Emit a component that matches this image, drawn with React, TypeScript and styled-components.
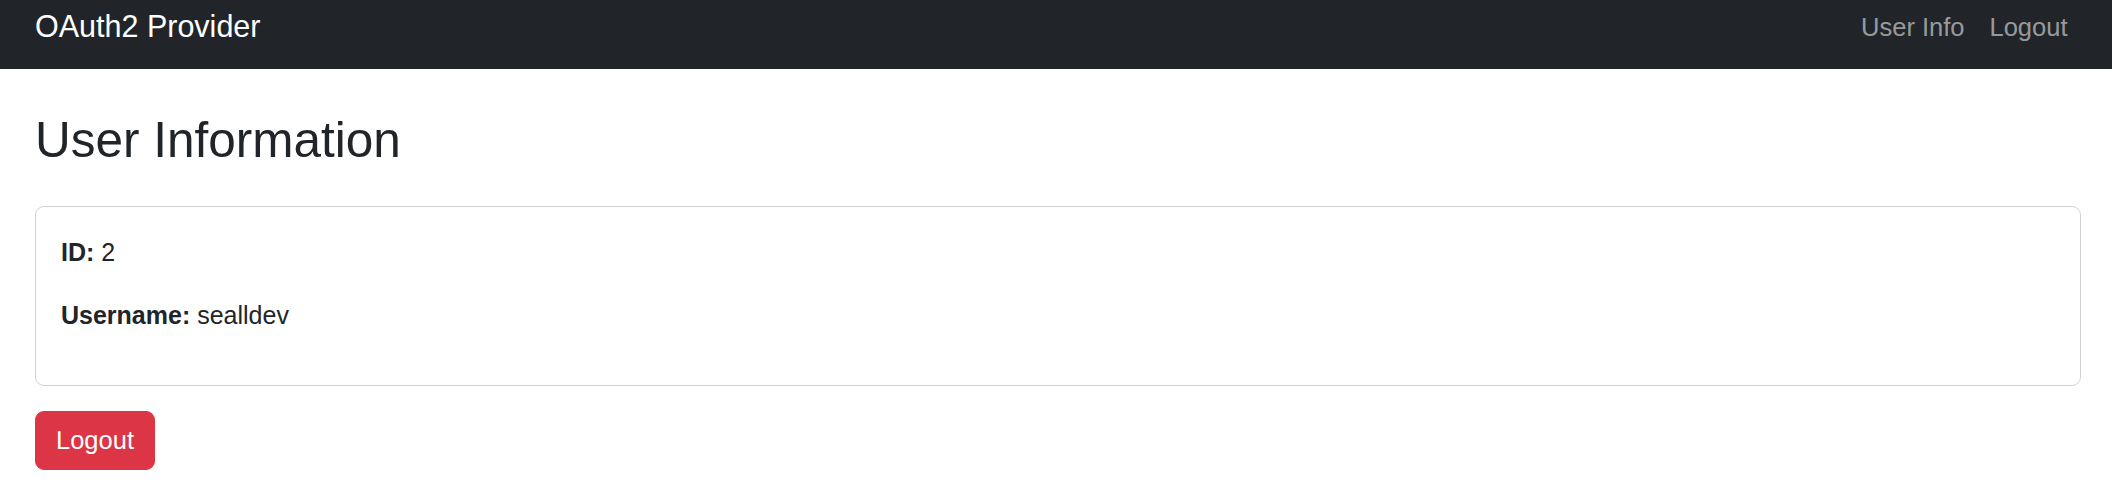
import React from 'react'
import styled, { createGlobalStyle } from 'styled-components'

const GlobalStyle = createGlobalStyle`
  * {
    box-sizing: border-box;
  }

  body {
    margin: 0;
    background: #ffffff;
    color: #212529;
    font-family: 'Liberation Sans', Arial, sans-serif;
  }
`

const Navbar = styled.nav`
  height: 69px;
  background-color: #212529;
  display: flex;
  align-items: center;
  justify-content: space-between;
  padding: 0 32px 16px 35px;
`

const Brand = styled.a`
  font-size: 30.5px;
  line-height: 45px;
  color: #ffffff;
  text-decoration: none;
  white-space: nowrap;
`

const NavLinks = styled.ul`
  display: flex;
  list-style: none;
  margin: 0;
  padding: 0;
`

const NavLink = styled.a`
  display: block;
  padding: 0 12.5px;
  font-size: 25.5px;
  line-height: 36px;
  color: rgba(255, 255, 255, 0.55);
  text-decoration: none;
  white-space: nowrap;
`

const Main = styled.main`
  padding: 41px 31px 0 35px;
`

const Title = styled.h1`
  margin: 0 0 37px;
  font-size: 49.5px;
  line-height: 59.4px;
  font-weight: 500;
`

const Card = styled.div`
  border: 1px solid rgba(0, 0, 0, 0.175);
  border-radius: 9px;
  padding: 27px 25px 25px;
`

const Field = styled.p`
  margin: 0 0 27px;
  font-size: 25px;
  line-height: 36px;

  strong {
    font-weight: 700;
  }
`

const DangerButton = styled.button`
  margin-top: 25px;
  height: 59px;
  padding: 0 20px;
  border: 1px solid #dc3545;
  border-radius: 9px;
  background-color: #dc3545;
  color: #ffffff;
  font-family: inherit;
  font-size: 25.5px;
  line-height: 57px;
  cursor: pointer;
`

const user = { id: 2, username: 'sealldev' }

const App: React.FC = () => {
  return (
    <>
      <GlobalStyle />
      <Navbar>
        <Brand href="#">OAuth2 Provider</Brand>
        <NavLinks>
          <li>
            <NavLink href="#">User Info</NavLink>
          </li>
          <li>
            <NavLink href="#">Logout</NavLink>
          </li>
        </NavLinks>
      </Navbar>
      <Main>
        <Title>User Information</Title>
        <Card>
          <Field>
            <strong>ID:</strong> {user.id}
          </Field>
          <Field>
            <strong>Username:</strong> {user.username}
          </Field>
        </Card>
        <DangerButton type="button">Logout</DangerButton>
      </Main>
    </>
  )
}

export default App
